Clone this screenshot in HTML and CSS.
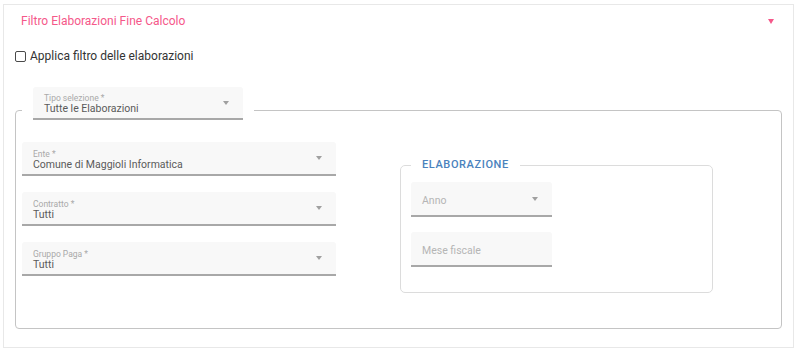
FILE: index.html
```html
<!DOCTYPE html>
<html lang="it">
<head>
    <meta charset="UTF-8">
    <meta name="viewport" content="width=device-width, initial-scale=1.0">
    <link rel="stylesheet" href="styles.css">
    <title>Filtro Elaborazioni Fine Calcolo</title>
</head>
<body>
    <div class="page">
        <div class="card">
            <div class="card-header">
                <span class="card-title">Filtro Elaborazioni Fine Calcolo</span>
                <span class="caret caret-pink"></span>
            </div>
            <div class="card-body">
                <label class="check-row">
                    <span class="checkbox"></span>
                    <span>Applica filtro delle elaborazioni</span>
                </label>

                <fieldset class="main-set">
                    <legend class="main-legend">
                        <div class="field field-tipo">
                            <div class="field-text">
                                <div class="field-label">Tipo selezione *</div>
                                <div class="field-value">Tutte le Elaborazioni</div>
                            </div>
                            <span class="caret"></span>
                        </div>
                    </legend>

                    <div class="columns">
                        <div class="left-col">
                            <div class="field">
                                <div class="field-text">
                                    <div class="field-label">Ente *</div>
                                    <div class="field-value">Comune di Maggioli Informatica</div>
                                </div>
                                <span class="caret"></span>
                            </div>
                            <div class="field">
                                <div class="field-text">
                                    <div class="field-label">Contratto *</div>
                                    <div class="field-value">Tutti</div>
                                </div>
                                <span class="caret"></span>
                            </div>
                            <div class="field">
                                <div class="field-text">
                                    <div class="field-label">Gruppo Paga *</div>
                                    <div class="field-value">Tutti</div>
                                </div>
                                <span class="caret"></span>
                            </div>
                        </div>

                        <fieldset class="sub-set">
                            <legend class="sub-legend">ELABORAZIONE</legend>
                            <div class="field field-small">
                                <span class="placeholder">Anno</span>
                                <span class="caret"></span>
                            </div>
                            <div class="field field-small">
                                <span class="placeholder">Mese fiscale</span>
                            </div>
                        </fieldset>
                    </div>
                </fieldset>
            </div>
        </div>
    </div>
</body>
</html>
```

FILE: styles.css
```css
body {
    margin: 0;
    font-family: Roboto, 'Liberation Sans', sans-serif;
    background: #fff;
}

.page {
    padding: 4px 6px 6px 3px;
}

.card {
    border: 1px solid #e8e8e8;
    background: #fff;
}

.card-header {
    height: 32px;
    display: flex;
    align-items: center;
    justify-content: space-between;
    padding: 0 19px 0 17px;
}

.card-title {
    font-size: 12px;
    color: #f5588a;
}

.caret {
    width: 0;
    height: 0;
    border-left: 3px solid transparent;
    border-right: 3px solid transparent;
    border-top: 4px solid #a0a0a0;
}

.caret-pink {
    border-left-width: 3.5px;
    border-right-width: 3.5px;
    border-top: 5px solid #f5588a;
}

.card-body {
    padding: 0 11px 18px 11px;
}

.check-row {
    display: flex;
    align-items: center;
    gap: 4px;
    height: 14px;
    margin-top: 12px;
    font-size: 12px;
    color: #333;
}

.checkbox {
    width: 9px;
    height: 9px;
    border: 1.5px solid #4a4a4a;
    border-radius: 2px;
}

.main-set {
    margin: 24px 0 0 0;
    padding: 9px 6px 35px 6px;
    border: 1px solid #c4c4c4;
    border-radius: 4px;
}

.main-legend {
    padding: 0 11px 13px 11px;
}

.field {
    display: flex;
    align-items: center;
    justify-content: space-between;
    box-sizing: border-box;
    height: 34px;
    padding: 0 14px 0 11px;
    background: #f8f8f8;
    border-bottom: 2px solid #a8a8a8;
    border-radius: 3px 3px 0 0;
}

.field-tipo {
    width: 210px;
    height: 33px;
    padding-right: 14px;
}

.field-text {
    padding-top: 2px;
}

.field-label {
    font-size: 8.5px;
    line-height: 10px;
    color: #a9a9a9;
}

.field-value {
    font-size: 10.5px;
    line-height: 11px;
    color: #5a5a5a;
}

.columns {
    display: grid;
    grid-template-columns: 314px 313px;
    column-gap: 64px;
    align-items: start;
}

.left-col {
    display: flex;
    flex-direction: column;
    gap: 16px;
}

.sub-set {
    margin: 16px 0 0 0;
    padding: 10px 10px 25px 10px;
    border: 1px solid #dcdcdc;
    border-radius: 5px;
    display: flex;
    flex-direction: column;
    gap: 15px;
}

.sub-legend {
    padding: 0 11px;
    font-size: 11px;
    line-height: 14px;
    font-weight: 500;
    letter-spacing: 0.6px;
    color: #4a82bd;
}

.field-small {
    width: 141px;
    height: 35px;
    padding-right: 14px;
}

.placeholder {
    font-size: 10.5px;
    padding-top: 3px;
    color: #b5b5b5;
}
```
